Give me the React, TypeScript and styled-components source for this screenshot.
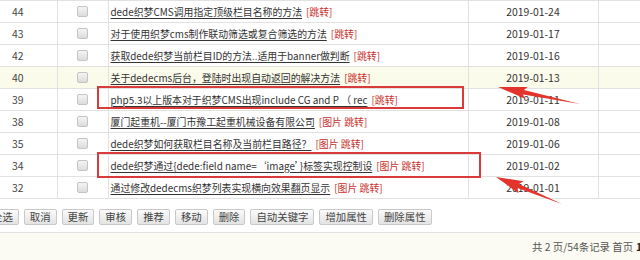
import styled, { createGlobalStyle } from "styled-components";

const GlobalStyle = createGlobalStyle`
  html, body {
    margin: 0;
    padding: 0;
    background: #fff;
  }
  body {
    font-family: "Noto Sans CJK SC", "Noto Sans", sans-serif;
    font-size: 10.4px;
    color: #333;
  }
`;

const Page = styled.div`
  position: relative;
  width: 640px;
  height: 260px;
  overflow: hidden;
`;

const Table = styled.table`
  width: 640px;
  border-collapse: collapse;
  table-layout: fixed;
`;

const Row = styled.tr<{ $hl?: boolean }>`
  height: 22px;
  background: ${(p) => (p.$hl ? "#fbfbec" : "#fff")};
`;

const Cell = styled.td`
  border: 1px solid #e1e1e1;
  padding: 0;
  line-height: 14px;
  white-space: nowrap;
  overflow: hidden;
  &:first-child {
    border-left: none;
  }
  &:last-child {
    border-right: none;
  }
`;

const IdCell = styled(Cell)`
  padding-left: 12px;
  color: #444;
`;

const CheckCell = styled(Cell)`
  text-align: center;
`;

const TitleCell = styled(Cell)`
  padding-left: 2px;
  font-size: 9.9px;
`;

const DateCell = styled(Cell)`
  text-align: center;
  color: #333;
`;

const Check = styled.span`
  display: inline-block;
  width: 9px;
  height: 9px;
  border: 1px solid #c4c4c4;
  border-radius: 2px;
  background: linear-gradient(#f4f4f4, #dcdcdc);
  vertical-align: middle;
  margin-top: -3px;
`;

const TitleLink = styled.a`
  color: #333;
  text-decoration: underline;
  text-underline-offset: 2px;
  cursor: pointer;
`;

const Tag = styled.span`
  color: #c9302c;
  margin-left: 4px;
`;

const Toolbar = styled.div`
  display: flex;
  gap: 5px;
  margin-left: -14px;
  padding: 10px 0 7px;
  border-bottom: 1px solid #e2e2e2;
`;

const Btn = styled.button`
  height: 16px;
  padding: 0 5px;
  border: 1px solid #c9c9c9;
  border-radius: 2px;
  background: linear-gradient(#fbfbfb, #e3e3e3);
  font-family: inherit;
  font-size: 10.4px;
  line-height: 14px;
  color: #444;
  white-space: nowrap;
`;

const Footer = styled.div`
  height: 27px;
  background: #fbfbf3;
  display: flex;
  align-items: center;
  padding-left: 532px;
  white-space: nowrap;
  color: #555;
  b {
    color: #222;
    margin-left: 3px;
  }
`;

const Overlay = styled.svg`
  position: absolute;
  top: 0;
  left: 0;
  pointer-events: none;
`;

interface Item {
  id: number;
  title: string;
  pic?: boolean;
  date: string;
  hl?: boolean;
}

const items: Item[] = [
  { id: 44, title: "dede织梦CMS调用指定顶级栏目名称的方法", date: "2019-01-24" },
  { id: 43, title: "对于使用织梦cms制作联动筛选或复合筛选的方法", date: "2019-01-17" },
  { id: 42, title: "获取dede织梦当前栏目ID的方法..适用于banner做判断", date: "2019-01-16" },
  { id: 40, title: "关于dedecms后台，登陆时出现自动返回的解决方法", date: "2019-01-13", hl: true },
  { id: 39, title: "php5.3以上版本对于织梦CMS出现include CG and P （ rec", date: "2019-01-11" },
  { id: 38, title: "厦门起重机--厦门市豫工起重机械设备有限公司", pic: true, date: "2019-01-08" },
  { id: 35, title: "dede织梦如何获取栏目名称及当前栏目路径？", pic: true, date: "2019-01-06" },
  { id: 34, title: "dede织梦通过{dede:field name=‘image’}标签实现控制设", pic: true, date: "2019-01-02" },
  { id: 32, title: "通过修改dedecms织梦列表实现横向效果翻页显示", pic: true, date: "2019-01-01" },
];

const buttons = ["全选", "取消", "更新", "审核", "推荐", "移动", "删除", "自动关键字", "增加属性", "删除属性"];

// tapered arrow from tip to tail
function arrow(tx: number, ty: number, ex: number, ey: number, head: number, hw: number, sw: number) {
  const dx = ex - tx;
  const dy = ey - ty;
  const len = Math.hypot(dx, dy);
  const ux = dx / len;
  const uy = dy / len;
  const nx = -uy;
  const ny = ux;
  const bx = tx + ux * head;
  const by = ty + uy * head;
  const pts = [
    [tx, ty],
    [bx + nx * hw + ux * 3, by + ny * hw + uy * 3],
    [bx + nx * sw, by + ny * sw],
    [ex, ey],
    [bx - nx * sw, by - ny * sw],
    [bx - nx * hw + ux * 3, by - ny * hw + uy * 3],
  ];
  return pts.map((p) => p.join(",")).join(" ");
}

export default function App() {
  return (
    <>
      <GlobalStyle />
      <Page>
        <Table>
          <colgroup>
            <col style={{ width: 57 }} />
            <col style={{ width: 51 }} />
            <col style={{ width: 360 }} />
            <col style={{ width: 130 }} />
            <col style={{ width: 42 }} />
          </colgroup>
          <tbody>
            {items.map((it) => (
              <Row key={it.id} $hl={it.hl}>
                <IdCell>{it.id}</IdCell>
                <CheckCell>
                  <Check />
                </CheckCell>
                <TitleCell>
                  <TitleLink>{it.title}</TitleLink>
                  <Tag>{it.pic ? "[图片 跳转]" : "[跳转]"}</Tag>
                </TitleCell>
                <DateCell>{it.date}</DateCell>
                <Cell />
              </Row>
            ))}
          </tbody>
        </Table>
        <Toolbar>
          {buttons.map((b) => (
            <Btn key={b}>{b}</Btn>
          ))}
        </Toolbar>
        <Footer>
          共 2 页/54条记录 首页<b>1</b>
        </Footer>
        <Overlay width="640" height="260">
          <rect x="98" y="87" width="365" height="21" fill="none" stroke="#d93a3a" strokeWidth="2" />
          <rect x="98" y="153" width="382" height="24" fill="none" stroke="#d93a3a" strokeWidth="2" />
          <polygon points={arrow(498, 87, 580, 104, 26, 6, 2.2)} fill="#e2342c" />
          <polygon points={arrow(496, 177, 562, 204, 24, 6.5, 2.2)} fill="#e2342c" />
        </Overlay>
      </Page>
    </>
  );
}
